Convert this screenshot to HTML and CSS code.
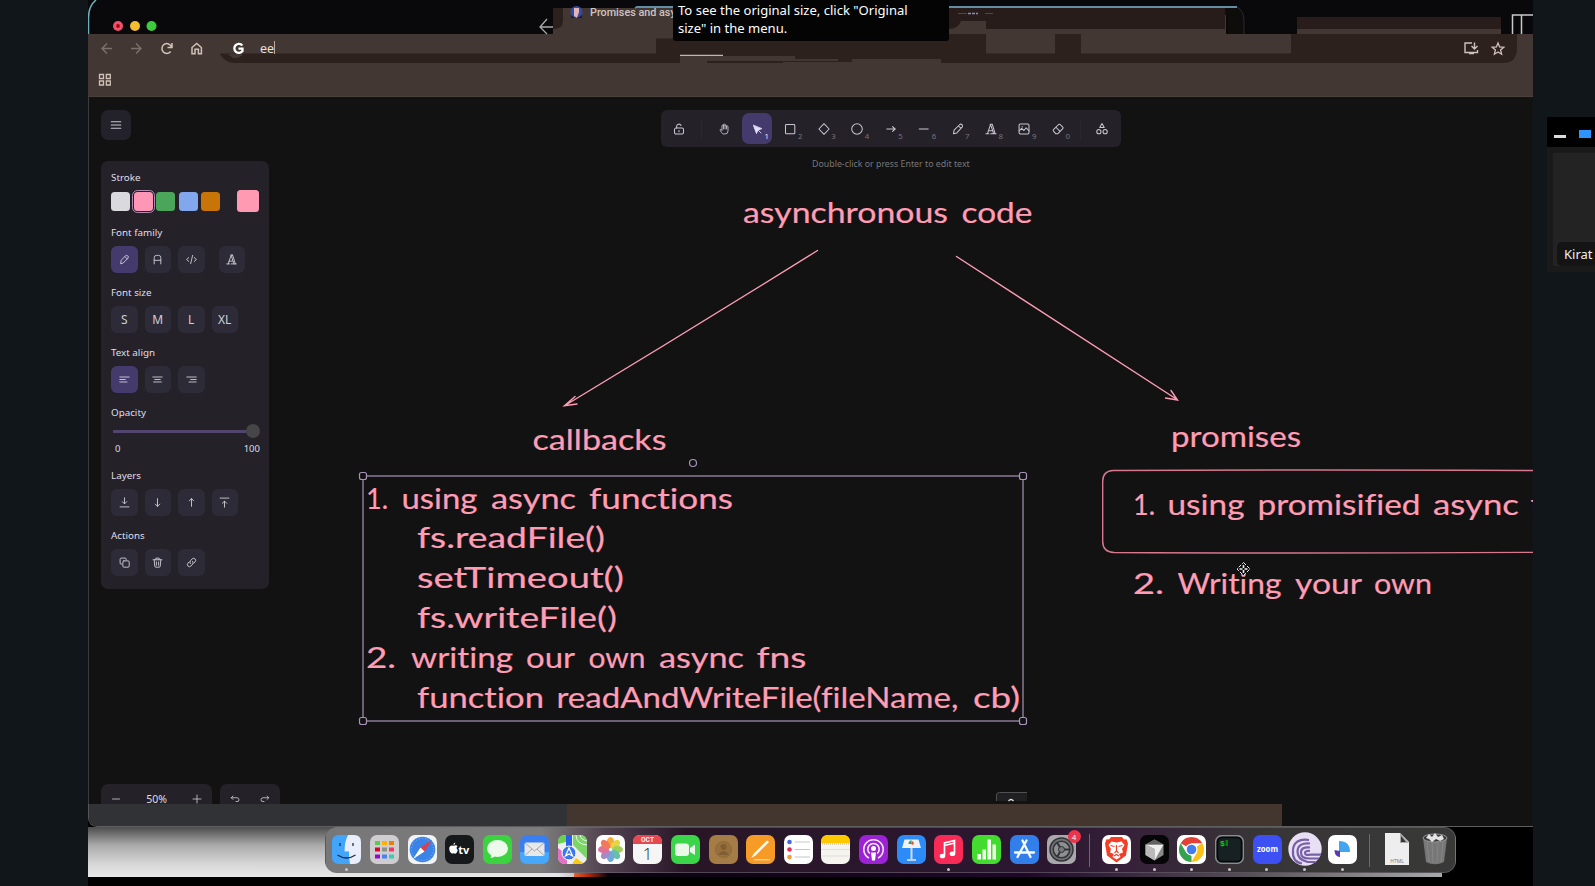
FILE: index.html
```html
<!DOCTYPE html>
<html lang="en">
<head>
<meta charset="utf-8">
<title>Promises and async</title>
<link rel="stylesheet" href="styles.css">
</head>
<body>
<main class="screen">
  <header class="chrome">
    <svg class="chrome-art" viewBox="88 0 1445 97" width="1445" height="97">
      <rect x="88" y="34" width="1445" height="63" fill="#433733"/>
      <path d="M88.5 34V18Q88.500 6 96 0" fill="none" stroke="#6fb0c0" stroke-width="1.500"/>
      <path d="M553 8h110v26H553z" fill="#433733"/>
      <path d="M553 8h10v13q0 8-10 8z" fill="#2b201c"/>
      <path d="M553 27h-13m7-8l-7 8 7 7" fill="none" stroke="#a9a9aa" stroke-width="1.300"/>
      <path d="M640 8h586v26H640z" fill="#433733"/>
      <path d="M949 8h276v21H949z" fill="#271c19"/>
      <path d="M949 29q9 0 12-8h25v13h-37z" fill="#433733"/>
      <path d="M1225 8h12q7 4 7 12v14h-16V15h-3z" fill="#0e0d0b"/>
      <path d="M636 9l2-2h599q7 4 7 13v14" fill="none" stroke="#2b2c2e" stroke-width="1"/>
      <path d="M635 8l2-1h600" fill="none" stroke="#628da4" stroke-width="1.800"/>
      <path d="M958 13.500h9m18 0h8" stroke="#55473f" stroke-width="1"/><path d="M968 13.500h10" stroke="#8a8ac4" stroke-width="1.500" stroke-dasharray="3 1"/>
      <path d="M1297 17h204v13h-204z" fill="#281d1b"/><path d="M1297 29h204v5h-204z" fill="#433733"/>
      <path d="M1512.500 34V15H1533M1521.500 15v19" fill="none" stroke="#c9c9cc" stroke-width="1.500"/>
      <path d="M220 53.500H656V38.500h17V34h844v13q0 16-13 16H235q-10 0-15-9z" fill="#2d211d"/>
      <path d="M986 34h69v19.500h-69zM1081 34h210v19.500h-210z" fill="#433733"/>
      <path d="M680 56h115v3h43v2H707v2h-27zM852 59h89v4H783v-1h69z" fill="#433733"/>
      <path d="M680 55.300h43" stroke="#cbb5a8" stroke-width="1.200"/>
      <path d="M228 54h15q-3 5-10 4z" fill="#433733"/>
      <path d="M88 96.500H1533" stroke="#4a403c"/>
      <g fill="none" stroke="#7d706a" stroke-width="1.400"><path d="M112 48.500h-10m5-5l-5 5 5 5M131 48.500h10m-5-5l5 5-5 5"/></g>
      <g fill="none" stroke="#d0c2bb" stroke-width="1.500"><path d="M171.500 47a4.900 4.900 0 1 0-.8 4.500M172 43v4.500h-4.500"/><path d="M192 47.500l4.700-4 4.700 4v6.300h-3v-4.500h-3.400v4.500h-3z"/>
      <path d="M99.500 74.500h4v4h-4zM106.300 74.500h4v4h-4zM99.500 81h4v4h-4zM106.300 81h4v4h-4z" stroke-width="1.300"/>
      <path d="M1472 43h-7v9.500h12.500V50M1469 53.500h5M1474.500 42.500v6m-3-2.500l3 3 3-3" stroke-width="1.400"/>
      <path d="M1498 43l1.600 4 4.200.3-3.200 2.700 1 4.200-3.600-2.300-3.600 2.300 1-4.200-3.200-2.700 4.200-.3z" stroke-width="1.300"/></g>
      <path d="M242.300 45.500a4.500 4.500 0 1 0 .2 5.500v-2.300h-4" fill="none" stroke="#fff" stroke-width="2.300"/>
      <circle cx="118" cy="26" r="5" fill="#f0506a"/><circle cx="118" cy="26" r="1.900" fill="#9d0716"/>
      <circle cx="135" cy="26" r="5" fill="#f5bd2f"/><circle cx="151.500" cy="26" r="5" fill="#3ccb3c"/>
      <circle cx="576.500" cy="12" r="6" fill="#2e4ba8"/><path d="M574 8h5v4l-2 6-3-2z" fill="#e2b4b4"/><path d="M571 15q5 6 11 0v3h-11z" fill="#211a2b"/>
      <path d="M274.500 41v13" stroke="#b9aca6"/>
    </svg>
    <span class="tab-title">Promises and asy</span>
    <span class="url">ee</span>
  </header>

  <section class="canvas">
    <svg class="drawing" viewBox="88 97 1445 707" width="1445" height="707">
      <g fill="none" stroke="#ff9db5" stroke-width="1.400" stroke-linecap="round">
        <path d="M817.500 250.500Q690 330 565 405.500M575 396.500L564.500 405.800 577 404"/>
        <path d="M956.500 256.500Q1070 330 1177 399.500M1171 390.500L1177.500 400 1165.500 398"/>
        <path d="M1540 470.500Q1300 469.500 1113 470.500Q1102.500 471 1102.700 482V541Q1102.500 552 1114 552.500Q1300 553.500 1540 552.300" stroke="#d8778e"/>
      </g>
      <g class="hand">
        <text y="222.500"><tspan x="743" textLength="205" lengthAdjust="spacingAndGlyphs">asynchronous</tspan><tspan x="961.500" textLength="71" lengthAdjust="spacingAndGlyphs">code</tspan></text>
        <text y="450" x="532.500" textLength="134" lengthAdjust="spacingAndGlyphs">callbacks</text>
        <text y="447" x="1171" textLength="130" lengthAdjust="spacingAndGlyphs">promises</text>
        <text y="509"><tspan x="366" textLength="22" lengthAdjust="spacingAndGlyphs">1.</tspan><tspan x="401.500" textLength="76" lengthAdjust="spacingAndGlyphs">using</tspan><tspan x="491" textLength="85" lengthAdjust="spacingAndGlyphs">async</tspan><tspan x="589" textLength="144" lengthAdjust="spacingAndGlyphs">functions</tspan></text>
        <text y="548" x="417" textLength="188" lengthAdjust="spacingAndGlyphs">fs.readFile()</text>
        <text y="588" x="417" textLength="207" lengthAdjust="spacingAndGlyphs">setTimeout()</text>
        <text y="627.500" x="417" textLength="200" lengthAdjust="spacingAndGlyphs">fs.writeFile()</text>
        <text y="668"><tspan x="366" textLength="30" lengthAdjust="spacingAndGlyphs">2.</tspan><tspan x="411" textLength="102" lengthAdjust="spacingAndGlyphs">writing</tspan><tspan x="526" textLength="49" lengthAdjust="spacingAndGlyphs">our</tspan><tspan x="588.500" textLength="57" lengthAdjust="spacingAndGlyphs">own</tspan><tspan x="659" textLength="85" lengthAdjust="spacingAndGlyphs">async</tspan><tspan x="756.500" textLength="50" lengthAdjust="spacingAndGlyphs">fns</tspan></text>
        <text y="707.500"><tspan x="417" textLength="127" lengthAdjust="spacingAndGlyphs">function</tspan><tspan x="556.500" textLength="402" lengthAdjust="spacingAndGlyphs">readAndWriteFile(fileName,</tspan><tspan x="973" textLength="47" lengthAdjust="spacingAndGlyphs">cb)</tspan></text>
        <text y="515"><tspan x="1133" textLength="22" lengthAdjust="spacingAndGlyphs">1.</tspan><tspan x="1167.500" textLength="77" lengthAdjust="spacingAndGlyphs">using</tspan><tspan x="1257.500" textLength="163" lengthAdjust="spacingAndGlyphs">promisified</tspan><tspan x="1433" textLength="86" lengthAdjust="spacingAndGlyphs">async</tspan><tspan x="1530.500">f</tspan></text>
        <text y="594"><tspan x="1133" textLength="31" lengthAdjust="spacingAndGlyphs">2.</tspan><tspan x="1177.500" textLength="104" lengthAdjust="spacingAndGlyphs">Writing</tspan><tspan x="1295" textLength="67" lengthAdjust="spacingAndGlyphs">your</tspan><tspan x="1374" textLength="58" lengthAdjust="spacingAndGlyphs">own</tspan></text>
      </g>
      <g fill="#121213" stroke="#a892b8" stroke-width="1.200">
        <rect x="363" y="476" width="660" height="245" fill="none"/>
        <rect x="359.500" y="472.500" width="7" height="7" rx="2"/><rect x="1019.500" y="472.500" width="7" height="7" rx="2"/>
        <rect x="359.500" y="717.500" width="7" height="7" rx="2"/><rect x="1019.500" y="717.500" width="7" height="7" rx="2"/>
        <circle cx="693" cy="463" r="3.500"/>
      </g>
      <path d="M1243.500 562.500l6.500 6.500-6.500 6.500-6.500-6.500z" fill="#111" stroke="#eee" stroke-dasharray="3.500 1.500"/><path d="M1243.500 565v8M1239.500 569h8" stroke="#eee" stroke-width="1.600" stroke-dasharray="3 2"/>
      <path d="M996.500 801v-6q0-2.500 3-2.500H1027v8.500z" fill="#202023"/><path d="M996.500 801v-6q0-2.500 3-2.500H1027" fill="none" stroke="#515154"/><path d="M1008.500 801q2.500-3 5 0" fill="none" stroke="#ddd" stroke-width="1.300"/>
    </svg>

    <button class="menu"><svg class="ico" viewBox="0 0 20 20"><path d="M2 4.500h16M2 10h16M2 15.500h16"/></svg></button>

    <nav class="tools">
      <span class="tool lock"><svg class="ico" viewBox="0 0 20 20"><rect x="2.500" y="8.500" width="15" height="10" rx="2.500"/><path d="M6 8.500V5.500a4 4 0 0 1 7.500-1.500M10 12.500v2"/></svg></span>
      <i class="rule"></i>
      <span class="tool"><svg class="ico" viewBox="0 0 24 24"><path d="M8 13V5.500a1.500 1.500 0 0 1 3 0V12M11 5.500v-2a1.500 1.500 0 1 1 3 0V12M14 5.500a1.500 1.500 0 0 1 3 0V12M17 7.500a1.500 1.500 0 0 1 3 0V16a6 6 0 0 1-6 6h-2c-3 0-4-1-7.500-7.200a1.500 1.500 0 0 1 2.500-1.700L8 15"/></svg></span>
      <span class="tool on"><svg class="ico solid" viewBox="0 0 24 24"><path d="M5 5l6 16 2.800-6.500L21 11.500zM14 14l6 6"/></svg><b>1</b></span>
      <span class="tool"><svg class="ico" viewBox="0 0 20 20"><rect x="2.500" y="2.500" width="15.500" height="15.500" rx="1.500"/></svg><b>2</b></span>
      <span class="tool"><svg class="ico" viewBox="0 0 20 20"><path d="M10 1.200l8.500 8.800-8.500 8.800L1.500 10z"/></svg><b>3</b></span>
      <span class="tool"><svg class="ico" viewBox="0 0 20 20"><circle cx="10" cy="10" r="8.800"/></svg><b>4</b></span>
      <span class="tool"><svg class="ico" viewBox="0 0 20 20"><path d="M3 10h14M12.500 6l4.500 4-4.500 4"/></svg><b>5</b></span>
      <span class="tool"><svg class="ico" viewBox="0 0 20 20"><path d="M2 10h15"/></svg><b>6</b></span>
      <span class="tool"><svg class="ico" viewBox="0 0 20 20"><path d="M2.500 18l1-6L13 2.500q2-1.500 4 .5 1.500 2-.2 4L8 16.500zM11 5l4 4"/></svg><b>7</b></span>
      <span class="tool"><svg class="ico" viewBox="0 0 20 20"><path d="M1.500 18h5M9.500 18h9M4 18L9.500 2h2.500l5 16M10 4.500l4.500 13.500M5.500 13H12M8.500 2H12"/></svg><b>8</b></span>
      <span class="tool"><svg class="ico" viewBox="0 0 20 20"><rect x="1.800" y="1.800" width="16.500" height="16.500" rx="2"/><path d="M2 13l4-4 4 3.500 3.500-4.500 5 5M7 6v.5"/></svg><b>9</b></span>
      <span class="tool"><svg class="ico" viewBox="0 0 20 20"><path d="M6.500 18L2.500 13.500q-1-1.300 0-2.500l8.500-8.500q1.300-1 2.500 0l4.500 4.500q1 1.200 0 2.500L9.500 18zM7 7.500l6 6"/></svg><b>0</b></span>
      <i class="rule last"></i>
      <span class="tool lock"><svg class="ico" viewBox="0 0 20 20"><path d="M10 1l3.700 6.500H6.300z"/><circle cx="4.800" cy="14.500" r="3.500"/><circle cx="15.200" cy="14.500" r="3.500"/></svg></span>
    </nav>
    <p class="hint">Double-click or press Enter to edit text</p>

    <aside class="panel">
      <div class="group stroke"><h2>Stroke</h2><div class="swatches"><i class="sw white"></i><i class="sw pink"></i><i class="sw green"></i><i class="sw blue"></i><i class="sw orange"></i><i class="sw current"></i></div></div>
      <div class="group"><h2>Font family</h2><div class="row">
        <span class="btn on"><svg class="ico" viewBox="0 0 20 20"><path d="M3 17l1-5.500 8-8.500q2-1.200 4 .5t.3 4L8 16zM11 5l4 4"/></svg></span>
        <span class="btn"><svg class="ico" viewBox="0 0 20 20"><path d="M4 18V6.500Q4 2.500 8 2.500h4q4 0 4 4V18M4 11.500h12"/></svg></span>
        <span class="btn"><svg class="ico" viewBox="0 0 20 20"><path d="M5 6.500L1 10l4 3.500M15 6.500l4 3.500-4 3.500M12 2.500L8.500 17.500"/></svg></span>
        <span class="btn apart"><svg class="ico" viewBox="0 0 20 20"><path d="M1.500 18h5M9.500 18h9M4 18L9.500 2h2.500l5 16M10 4.500l4.500 13.500M5.500 13H12M8.500 2H12"/></svg></span></div></div>
      <div class="group"><h2>Font size</h2><div class="row"><span class="btn">S</span><span class="btn">M</span><span class="btn">L</span><span class="btn">XL</span></div></div>
      <div class="group"><h2>Text align</h2><div class="row">
        <span class="btn on"><svg class="ico" viewBox="0 0 20 20"><path d="M1.500 5.500h17M1.500 10h10M1.500 14.500h13"/></svg></span>
        <span class="btn"><svg class="ico" viewBox="0 0 20 20"><path d="M1.500 5.500h17M5 10h10M3 14.500h14"/></svg></span>
        <span class="btn"><svg class="ico" viewBox="0 0 20 20"><path d="M1.500 5.500h17M8.500 10h10M5.500 14.500h13"/></svg></span></div></div>
      <div class="group opacity"><h2>Opacity</h2><div class="slider"><i></i></div><div class="range"><span>0</span><span>100</span></div></div>
      <div class="group"><h2>Layers</h2><div class="row">
        <span class="btn"><svg class="ico" viewBox="0 0 20 20"><path d="M10 1.500V12M6 8.500l4 4 4-4M2 18h16"/></svg></span>
        <span class="btn"><svg class="ico" viewBox="0 0 20 20"><path d="M10 3v14M6 13l4 4 4-4"/></svg></span>
        <span class="btn"><svg class="ico" viewBox="0 0 20 20"><path d="M10 17V3M6 7l4-4 4 4"/></svg></span>
        <span class="btn"><svg class="ico" viewBox="0 0 20 20"><path d="M10 18.500V8M6 11.500l4-4 4 4M2 2h16"/></svg></span></div></div>
      <div class="group"><h2>Actions</h2><div class="row">
        <span class="btn"><svg class="ico" viewBox="0 0 20 20"><rect x="7" y="7" width="11.500" height="11.500" rx="2"/><path d="M5 13H4q-2 0-2-2V4q0-2 2-2h7q2 0 2 2v1"/></svg></span>
        <span class="btn"><svg class="ico" viewBox="0 0 20 20"><path d="M2 5h16M4 5l1 11.500q0 2 2 2h6q2 0 2-2L16 5M7 5V2h6v3M8 9v6M12 9v6"/></svg></span>
        <span class="btn"><svg class="ico" viewBox="0 0 20 20"><path d="M8 12q-2-3 0-5l3-3.500q3-2.500 5.500 0t0 5.500L14 11M12 8q2 3 0 5l-3 3.500q-3 2.500-5.500 0t0-5.500L6 9"/></svg></span></div></div>
    </aside>

    <footer class="foot">
      <div class="pill zoom"><svg class="ico" viewBox="0 0 20 20"><path d="M3 10h14"/></svg><span>50%</span><svg class="ico" viewBox="0 0 20 20"><path d="M2 10h16M10 2v16"/></svg></div>
      <div class="pill undo"><svg class="ico" viewBox="0 0 20 20"><path d="M6 4L2.500 7.500 6 11M2.500 7.500H14q4 0 4 4t-4 3.500h-2"/></svg><svg class="ico" viewBox="0 0 20 20"><path d="M14 4l3.500 3.500L14 11M17.500 7.500H6q-4 0-4 4t4 3.500h2"/></svg></div>
    </footer>
  </section>

  <div class="strip"><i class="slate"></i><i class="brown"></i></div>

  <div class="desktop">
    <div class="dock">
      <span class="app dot"><svg viewBox="0 0 29 29"><rect width="29" height="29" rx="7" fill="#2f8ff5"/><path d="M0 14V7Q0 0 7 0h9q-4 7-3.500 16.500H17q0 6 1 12.500H7q-7 0-7-7z" fill="#43a5f9"/><path d="M16 0h6q7 0 7 7v15q0 7-7 7h-4q-1.300-6-1-12.500h-4.500Q12.500 6 16 0z" fill="#e9eefa"/><path d="M8 8v3M21 8v3M5.500 20q9 6 18 0" fill="none" stroke="#18304d" stroke-width="1.300"/></svg></span>
      <span class="app"><svg viewBox="0 0 29 29"><rect width="29" height="29" rx="7" fill="#cfcdd0"/><path d="M5 6h5v4H5z" fill="#5bcb4d"/><path d="M12 6h5v4h-5z" fill="#ffb000"/><path d="M19 6h5v4h-5z" fill="#e58300"/><path d="M5 12.500h5v4H5z" fill="#d8062a"/><path d="M12 12.500h5v4h-5z" fill="#8a9487"/><path d="M19 12.500h5v4h-5z" fill="#f03768"/><path d="M5 19.500h5v4H5z" fill="#9208d2"/><path d="M12 19.500h5v4h-5z" fill="#4b82ec"/><path d="M19 19.500h5v4h-5z" fill="#38ccb2"/></svg></span>
      <span class="app"><svg viewBox="0 0 29 29"><rect width="29" height="29" rx="7" fill="#f1f3f5"/><circle cx="14.500" cy="14.500" r="12.800" fill="#3b83e6"/><circle cx="14.500" cy="14.500" r="11" fill="none" stroke="#8dbbf4" stroke-dasharray="1 2"/><path d="M24 5L16.500 16.500 12.500 12.500z" fill="#e23d46"/><path d="M5 24l7.500-11.500 4 4z" fill="#fff"/></svg></span>
      <span class="app"><svg viewBox="0 0 29 29"><rect width="29" height="29" rx="7" fill="#15191a"/><path d="M8.500 10.800q3-1.500 4 .5-2 1.500.3 4-1.500 4.500-3.300 3.300-1-.5-2 0c-2 .5-4-4-3-6.500q1-2.500 4-1.300zM8.300 10q0-2 2-2.500 0 2-2 2.500z" fill="#fff"/><text x="13.200" y="18.700" class="tv">tv</text></svg></span>
      <span class="app"><svg viewBox="0 0 29 29"><rect width="29" height="29" rx="7" fill="#3bd440"/><ellipse cx="14.500" cy="13.500" rx="10.500" ry="8.500" fill="#edf9eb"/><path d="M8 19q1 3-1 4 4 0 6-3z" fill="#edf9eb"/></svg></span>
      <span class="app"><svg viewBox="0 0 29 29"><rect width="29" height="29" rx="7" fill="#397ff2"/><path d="M0 17h29v5q0 7-7 7H7q-7 0-7-7z" fill="#46a7fb"/><rect x="4.500" y="7.500" width="20" height="13.500" rx="1.500" fill="#e8e8ea"/><path d="M5 8l9.500 8L24 8M5 20.500l7-6.500M24 20.500L17 14" fill="none" stroke="#a8a9ac"/></svg></span>
      <span class="app"><svg viewBox="0 0 29 29"><rect width="29" height="29" rx="7" fill="#eee"/><path d="M0 7q0-7 7-7h1v7L0 9z" fill="#6ad04f"/><path d="M15 0h7q7 0 7 7v17L15 10z" fill="#7bd667"/><path d="M18 0q0 9 11 10M22 0q1 5 7 6" fill="none" stroke="#eee"/><path d="M0 13l9 7v9H7q-7 0-7-7z" fill="#e370c2"/><path d="M14 29l4-6 7 5-3 1z" fill="#f8cb12"/><path d="M8 0h6v13H8z" fill="#2561eb"/><circle cx="11" cy="18" r="7" fill="#3979ed" stroke="#fff"/><path d="M11 13l3.500 8-3.500-2-3.500 2z" fill="none" stroke="#fff" stroke-width="1.300"/></svg></span>
      <span class="app"><svg viewBox="0 0 29 29"><rect width="29" height="29" rx="7" fill="#fff"/><g opacity=".86"><ellipse cx="14.500" cy="7.500" rx="3.700" ry="5.500" fill="#f99d16"/><ellipse cx="14.500" cy="7.500" rx="3.700" ry="5.500" fill="#e3cf25" transform="rotate(45 14.500 14.500)"/><ellipse cx="14.500" cy="7.500" rx="3.700" ry="5.500" fill="#96c83d" transform="rotate(90 14.500 14.500)"/><ellipse cx="14.500" cy="7.500" rx="3.700" ry="5.500" fill="#4bb79c" transform="rotate(135 14.500 14.500)"/><ellipse cx="14.500" cy="7.500" rx="3.700" ry="5.500" fill="#5c9bd6" transform="rotate(180 14.500 14.500)"/><ellipse cx="14.500" cy="7.500" rx="3.700" ry="5.500" fill="#9577be" transform="rotate(225 14.500 14.500)"/><ellipse cx="14.500" cy="7.500" rx="3.700" ry="5.500" fill="#d85a8b" transform="rotate(270 14.500 14.500)"/><ellipse cx="14.500" cy="7.500" rx="3.700" ry="5.500" fill="#f26246" transform="rotate(315 14.500 14.500)"/></g></svg></span>
      <span class="app"><svg viewBox="0 0 29 29"><rect width="29" height="29" rx="7" fill="#f7f6f6"/><path d="M0 9V7q0-7 7-7h15q7 0 7 7v2z" fill="#e54850"/><text x="14.500" y="7" class="month">OCT</text><text x="14.500" y="24.500" class="day">1</text></svg></span>
      <span class="app"><svg viewBox="0 0 29 29"><rect width="29" height="29" rx="7" fill="#3bd54a"/><rect x="4" y="8.500" width="14" height="12.500" rx="3" fill="#e9f8e8"/><path d="M19 13l5-3.500v10.500L19 17z" fill="#e9f8e8"/></svg></span>
      <span class="app"><svg viewBox="0 0 29 29"><rect width="29" height="29" rx="7" fill="#a57c46"/><circle cx="14.500" cy="14.500" r="8" fill="#98703d" stroke="#8d6a39"/><circle cx="14.500" cy="12" r="3" fill="#7f5e34"/><path d="M9 20q5.500-8 11 0z" fill="#7f5e34"/></svg></span>
      <span class="app"><svg viewBox="0 0 29 29"><rect width="29" height="29" rx="7" fill="#f79b27"/><path d="M5.500 23l2-4L21 5.500l2 1.500L9.500 20.500z" fill="#fff"/><path d="M8 24.800h16" stroke="#fde0bb"/></svg></span>
      <span class="app"><svg viewBox="0 0 29 29"><rect width="29" height="29" rx="7" fill="#fff"/><path d="M10.500 7H26M10.500 14.500H26M10.500 22H26" stroke="#c7c7ca"/><circle cx="5.500" cy="7" r="2.300" fill="#4466e2"/><circle cx="5.500" cy="14.500" r="2.300" fill="#e72957"/><circle cx="5.500" cy="22" r="2.300" fill="#f29a35"/></svg></span>
      <span class="app"><svg viewBox="0 0 29 29"><rect width="29" height="29" rx="7" fill="#f5f4ef"/><path d="M0 8V7q0-7 7-7h15q7 0 7 7v1z" fill="#ffc900"/><path d="M1 9h27" stroke="#b9ab88" stroke-dasharray="1 1"/><path d="M0 14.500h29M0 21h29" stroke="#dfdedb"/></svg></span>
      <span class="app"><svg viewBox="0 0 29 29"><rect width="29" height="29" rx="7" fill="#9c23d5"/><g fill="none" stroke="#f7e9fc" stroke-width="1.600"><path d="M10 23a9.700 9.700 0 1 1 9 0M10.800 18.500a5.700 5.700 0 1 1 7.400 0"/></g><circle cx="14.500" cy="13.500" r="2.500" fill="#fff"/><path d="M12 17.500h5l-1 8h-3z" fill="#fff"/></svg></span>
      <span class="app"><svg viewBox="0 0 29 29"><rect width="29" height="29" rx="7" fill="#2c8bf7"/><path d="M7.500 4.500h14l2.500 8.500H5z" fill="#f1f2f3"/><path d="M14.500 13v11" stroke="#cfdceb" stroke-width="2"/><path d="M10 25h9" stroke="#e6eef7" stroke-width="1.500"/><path d="M14.500 5v4h-3q0-3 3-4z" fill="#2b9d74"/><path d="M15 6q3 1 1 4l-2-1z" fill="#db5a40"/></svg></span>
      <span class="app dot"><svg viewBox="0 0 29 29"><rect width="29" height="29" rx="7" fill="#f72b56"/><path d="M10.500 20V8l10-2.500V18M10.500 10.500l10-2.500" fill="none" stroke="#fff" stroke-width="1.700"/><ellipse cx="8.500" cy="21" rx="2.800" ry="2.300" fill="#fff"/><ellipse cx="18.500" cy="18.800" rx="2.800" ry="2.300" fill="#fff"/></svg></span>
      <span class="app"><svg viewBox="0 0 29 29"><rect width="29" height="29" rx="7" fill="#43db2d"/><path d="M5.500 19H9v5.500H5.500zM10.500 14.500H14v10h-3.500zM15.500 4.500H19v20h-3.500zM20.500 9.500H24v15h-3.500z" fill="#efffe9"/></svg></span>
      <span class="app"><svg viewBox="0 0 29 29"><rect width="29" height="29" rx="7" fill="#327fec"/><path d="M12.500 5.500L20.500 22M16.500 5.500L7.500 22M5 17.500h12M19.500 17.500H24" fill="none" stroke="#f5fbff" stroke-width="2.300" stroke-linecap="round"/></svg></span>
      <span class="app"><svg viewBox="0 0 29 29"><rect width="29" height="29" rx="7" fill="#a9a9ac"/><circle cx="14.500" cy="14.500" r="11.500" fill="#717276" stroke="#333437" stroke-width="1.500"/><circle cx="14.500" cy="14.500" r="8.300" fill="#8e8f93" stroke="#343538" stroke-width="1.500"/><path d="M14.500 14.500L10 7.500M14.500 14.500H23M14.500 14.500L10 22" stroke="#303135" stroke-width="2"/><circle cx="14.500" cy="14.500" r="3" fill="#77787c" stroke="#303135"/></svg><em class="badge">4</em></span>
      <i class="sep"></i>
      <span class="app dot"><svg viewBox="0 0 29 29"><rect width="29" height="29" rx="7" fill="#fff"/><path d="M9 2h11l2 2.500 2.500-.3 1.500 4.300-2 12-9.500 7-9.500-7-2-12 1.500-4.300L7 4.500z" fill="#f33e27"/><path d="M9.500 6.500l5 1 5-1 3 3.500-2.500 4 1 3.500-4 1.500 1.500 3-4 2.500-4-2.500 1.500-3-4-1.500 1-3.500L6.500 10z" fill="#fff"/><path d="M8.500 10.500l4 1M20.500 10.500l-4 1M14.500 10v6l-2 2M14.500 16l2 2M12 21l2.500-1.500L17 21" fill="none" stroke="#f33e27" stroke-width="1.200"/></svg></span>
      <span class="app dot"><svg viewBox="0 0 29 29"><rect width="29" height="29" rx="7" fill="#060606"/><path d="M14.500 4.500l9 5v10.500l-9 5.500-9-5.500V9.500z" fill="#898989"/><path d="M5.500 9.500h18l-9 16V14z" fill="#efefef"/><path d="M14.500 4.500l9 5h-18z" fill="#626262"/><path d="M14.500 14v11.500l-9-5.500V9.500z" fill="#bababa"/></svg></span>
      <span class="app dot"><svg viewBox="0 0 29 29"><rect width="29" height="29" rx="7" fill="#fff"/><path d="M14.500 14.500L3.700 8.300A12.400 12.400 0 0 1 25.300 8.300H14.500z" fill="#e44136"/><path d="M14.500 14.500L25.300 8.300A12.400 12.400 0 0 1 14.500 27l5.400-9.400z" fill="#fbc116"/><path d="M3.700 8.300l5.400 9.300 5.400 3.100L14.500 27A12.400 12.400 0 0 1 3.700 8.300z" fill="#35a34e"/><circle cx="14.500" cy="14.500" r="6" fill="#fff"/><circle cx="14.500" cy="14.500" r="4.800" fill="#437cec"/></svg></span>
      <span class="app dot"><svg viewBox="0 0 29 29"><rect x=".7" y=".7" width="27.600" height="27.600" rx="6" fill="#172023" stroke="#878b8b" stroke-width="1.500"/><rect x="2.500" y="2.500" width="24" height="24" rx="4.500" fill="none" stroke="#050808" stroke-width="1.500"/><text x="5" y="10.500" class="term">$</text><path d="M10.500 5h2.500v6h-2.500z" fill="#087e0b"/></svg></span>
      <span class="app dot"><svg viewBox="0 0 29 29"><rect width="29" height="29" rx="7" fill="#3c50f3"/><text x="14.500" y="17" class="zm" textLength="21" lengthAdjust="spacingAndGlyphs">zoom</text></svg></span>
      <span class="app dot big"><svg viewBox="0 0 34 34"><circle cx="17" cy="17" r="16.700" fill="#e8dff5"/><g fill="none" stroke="#7660a8" stroke-width="2.200"><path d="M21 8Q6 6 5 18t9 13.500M22 11.500Q10 10.500 9.500 19t10 11h8M22 15.500q-9-1-9 5t8 6h10M22 19q-5-.5-5 2t5 1.700h11"/></g></svg></span>
      <span class="app dot"><svg viewBox="0 0 29 29"><rect width="29" height="29" rx="7" fill="#fff"/><path d="M11 6q11 0 11 11H11z" fill="#42a5ef"/><path d="M6.500 15l5.500 1v6q-5.500 0-5.500-7z" fill="#5a3ab1"/></svg></span>
      <i class="sep"></i>
      <span class="app big"><svg viewBox="0 0 34 34"><path d="M5 1h15l9 9v23H5z" fill="#eeeeef"/><path d="M20 1v10h9z" fill="#aaa"/><path d="M21 4v6h5z" fill="#363636"/><text x="17" y="30.500" class="html">HTML</text></svg></span>
      <span class="app big"><svg viewBox="0 0 34 34"><path d="M5 6h24l-3 24q-9 4.500-18 0z" fill="#777778"/><path d="M9 10l2 20M14 10l1 21M20 10l-1 21M25 10l-2 20" stroke="#868687" stroke-width="1"/><ellipse cx="17" cy="6" rx="12" ry="4" fill="#3b3b3c" stroke="#999" stroke-width="1"/><path d="M8 6l3-4 3 3 3-4 3 4 4-2 2 4-4 2-4-2-4 3-3-3z" fill="#e4e4e5"/></svg></span>
    </div>
  </div>
  <div class="tip">To see the original size, click "Original size" in the menu.</div>
</main>
<aside class="side">
  <div class="call">
    <div class="call-bar"><i class="min"></i><i class="max"></i></div>
    <div class="call-body"><div class="tile"><span>Kirat</span></div></div>
  </div>
</aside>
</body>
</html>
```

FILE: styles.css
```css
* { box-sizing: border-box; }
body { margin: 0; width: 1595px; height: 886px; overflow: hidden; display: flex; padding-left: 88px; background: #11161a; font-family: "Noto Sans", sans-serif; color: #dedee3; }
.screen { position: relative; width: 1445px; height: 886px; display: flex; flex-direction: column; background: #000; overflow: hidden; }
.chrome { position: relative; height: 97px; flex: none; background: #09090b; }
.chrome-art, .drawing { display: block; }
.tab-title { position: absolute; left: 502px; top: 4px; font: 500 10.800px/17px Roboto, sans-serif; color: #cfc5c1; white-space: nowrap; }
.url { position: absolute; left: 172px; top: 40px; font: 12.500px/17px "Open Sans", sans-serif; color: #eee5df; }
.tip { position: absolute; left: 585px; top: 0; width: 276px; height: 41px; padding: 1px 30px 0 5px; border-radius: 0 0 3px 3px; background: #040404; color: #fff; font-size: 13.050px; line-height: 18px; }

.canvas { position: relative; height: 707px; flex: none; background: #121213; border-left: 1px solid #3b3b3d; overflow: hidden; }
.drawing { position: absolute; left: -1px; top: 0; }
.hand text { font-family: Lato, sans-serif; font-size: 29px; font-variant-ligatures: none; fill: #ff9db5; stroke: #ff9db5; stroke-width: .2px; }
.ico { width: 12px; height: 12px; fill: none; stroke: #c9c8d2; stroke-width: 1.700; stroke-linecap: round; stroke-linejoin: round; overflow: visible; flex: none; }
.solid { fill: #e6e0ff; stroke: #e6e0ff; }
.menu { position: absolute; left: 12px; top: 13px; width: 30px; height: 30px; border: 0; border-radius: 7px; background: #232129; display: grid; place-items: center; padding: 0; }
.tools { position: absolute; left: 572px; top: 13px; width: 460px; height: 37px; border-radius: 6px; background: #242129; display: flex; align-items: center; padding-left: 3px; }
.tool { position: relative; width: 30px; height: 31px; margin-right: 3.440px; display: grid; place-items: center; border-radius: 7px; flex: none; }
.tool.lock { margin-right: 0; }
.tool b { position: absolute; right: 3px; bottom: 2px; font-size: 7.800px; line-height: 11px; font-weight: 400; color: #76747f; }
.on { background: #443b6c; }
.tool.on b { color: #e6e0ff; }
.rule { width: 1px; height: 20px; background: #292730; margin: 0 6.500px 0 7px; }
.rule.last { margin: 0 6px 0 3.500px; }
.hint { position: absolute; left: 723px; top: 59px; margin: 0; font-size: 8.820px; line-height: 16px; color: #77777a; white-space: nowrap; }

.panel { position: absolute; left: 12px; top: 64px; width: 168px; height: 428px; border-radius: 7px; background: #242129; padding: 9px 9px 9px 10px; }
.group { height: 60.100px; }
.group h2 { margin: 0 0 5px; font-size: 9.800px; line-height: 16px; font-weight: 400; color: #e0dfe5; }
.group.stroke { height: 55px; }
.stroke h2 { margin-bottom: 4px; }
.swatches { display: flex; align-items: center; gap: 3.600px; height: 22px; }
.sw { width: 19px; height: 19px; border-radius: 3.500px; }
.white { background: #dadadd; }
.pink { background: #ff96b5; outline: 1px solid #ae8db5; outline-offset: 1px; }
.green { background: #4ba659; }
.blue { background: #83a7ef; }
.orange { background: #c87407; }
.current { width: 22px; height: 22px; background: #ff9ab2; margin-left: 13px; }
.row { display: flex; gap: 7px; }
.btn { width: 26.500px; height: 26.500px; border-radius: 6px; background: #2d2b37; display: grid; place-items: center; font-size: 12px; color: #d0ced8; }
.btn .ico { width: 11px; height: 11px; }
.btn.on { background: #443b6c; }
.apart { margin-left: 7px; }
.group.opacity { height: 63px; }
.slider { height: 10px; display: flex; align-items: center; justify-content: flex-end; background: linear-gradient(#51456f, #51456f) 2px 3.500px / 140px 3px no-repeat; }
.slider i { width: 14px; height: 14px; border-radius: 50%; background: #464547; }
.range { display: flex; justify-content: space-between; padding: 5px 0 0 4px; font-size: 9.500px; line-height: 16px; }

.foot { position: absolute; left: 12px; top: 687px; display: flex; gap: 8px; }
.pill { height: 30px; border-radius: 7px; background: #242129; display: flex; align-items: center; justify-content: space-between; font-size: 10.500px; }
.pill .ico { width: 10px; height: 10px; }
.zoom { width: 111px; padding: 0 10px; }
.undo { width: 60px; padding: 0 10px; }

.strip { height: 23px; flex: none; display: flex; background: #121212; border-bottom: 1px solid #5e5e5e; border-left: 1px solid #555; border-bottom-left-radius: 9px; }
.slate { width: 478px; background: #303236; border-bottom-left-radius: 8px; }
.brown { width: 715px; background: #43362f; }
.desktop { height: 50px; flex: none; padding-left: 237px; background: linear-gradient(90deg, transparent 470px, #170918 580px, #240a2c 930px, #08070a 1180px, #000 1350px), linear-gradient(#4c4c4c, #a9a9a9 18px, #d5d5d5 36px, #e8e8e8); position: relative; }
.desktop::after { content: ""; position: absolute; left: 486px; right: 91px; bottom: 0; height: 4px; background: linear-gradient(90deg, #e0642a, #b32a10 14px, #09030d 34px, #20072a 52%, #565057 78%, #aaa); z-index: 0; }
.dock { position: relative; z-index: 1; width: 1131px; height: 46px; display: flex; align-items: center; padding-left: 2px; border: 1px solid #77717b88; border-radius: 12px; background: linear-gradient(90deg, #777 0, #7d7d7d 215px, #51404e 280px, #281627 360px, #2b1730 720px, #36203a 800px, #383536 930px, #393938); }
.app { position: relative; width: 37.640px; height: 44px; display: grid; place-items: center; flex: none; padding-bottom: 2px; }
.app svg { width: 29px; height: 29px; }
.app.big svg { width: 34px; height: 34px; }
.dot::after { content: ""; position: absolute; left: 17px; bottom: 1px; width: 3px; height: 3px; border-radius: 50%; background: #c8c5c9; }
.sep { width: 1px; height: 33px; margin: 0 8.200px; background: #716773; flex: none; }
.badge { position: absolute; right: 0; top: 2px; width: 13px; height: 13px; border-radius: 50%; background: #e9354b; color: #fff; font: 8px/13px "Open Sans", sans-serif; text-align: center; }
.tv { font: 700 11px "Open Sans", sans-serif; fill: #fff; }
.month { font: 700 6px Inter, sans-serif; fill: #fff; text-anchor: middle; }
.day { font: 300 17px "Open Sans", sans-serif; fill: #222; text-anchor: middle; }
.term { font: 700 8px "Liberation Mono", monospace; fill: #16c916; }
.zm { font: 700 8px "Open Sans", sans-serif; fill: #fff; text-anchor: middle; }
.html { font: 5px "Open Sans", sans-serif; fill: #777; text-anchor: middle; }

.side { width: 62px; padding: 117px 0 0 14px; overflow: hidden; }
.call-bar { height: 30px; background: #000; display: flex; align-items: flex-end; gap: 13px; padding: 0 0 9px 7px; }
.min { width: 12px; height: 3px; background: #dcdcdc; flex: none; }
.max { width: 12px; height: 8px; background: #2d94ff; flex: none; }
.call-body { height: 125px; background: #1a1a1a; padding: 6px 0 6px 6px; }
.tile { height: 113px; background: #232323; display: flex; align-items: flex-end; padding-left: 4px; }
.tile span { width: 60px; height: 24px; flex: none; border-radius: 5px; background: #141414; padding-left: 7px; font-size: 13px; line-height: 24px; color: #eee; }
```
